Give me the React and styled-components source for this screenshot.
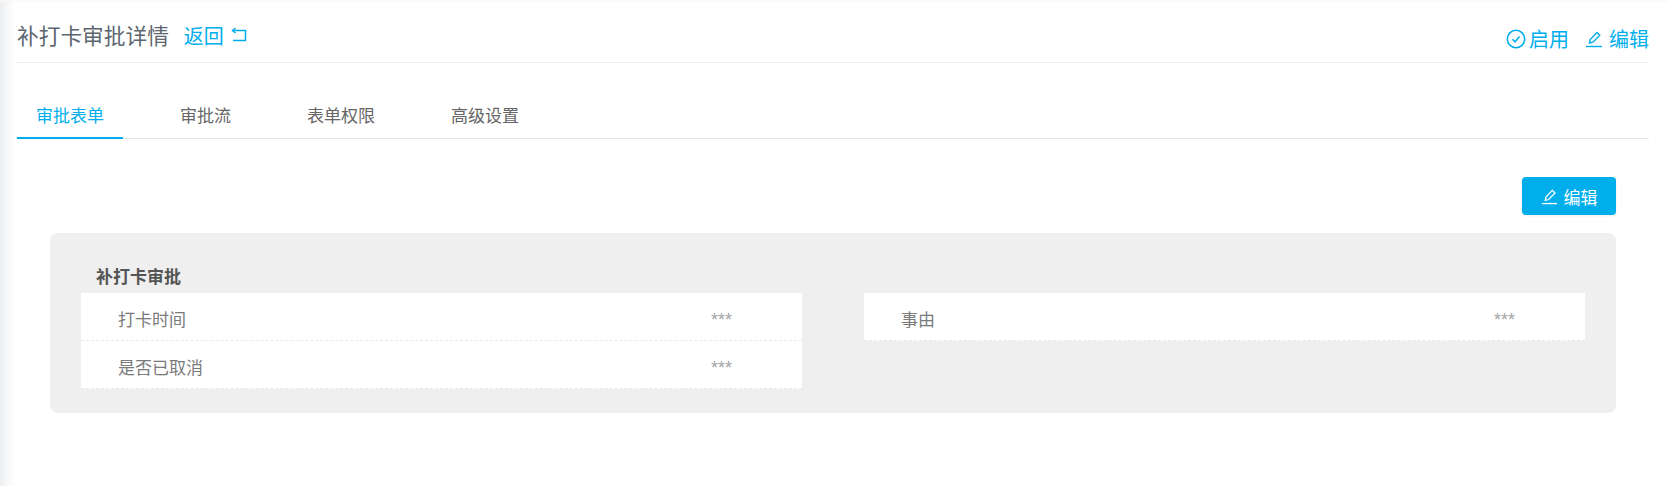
import React from 'react'
import styled, { createGlobalStyle } from 'styled-components'

const GlobalStyle = createGlobalStyle`
  html, body {
    margin: 0;
    padding: 0;
    background: #fff;
  }
  * {
    box-sizing: border-box;
  }
`;

const Page = styled.div`
  width: 1669px;
  height: 486px;
  overflow: hidden;
  padding: 0 20px 0 17px;
  background:
    linear-gradient(to bottom, #f8f8f8 0, rgba(255, 255, 255, 0) 3px),
    linear-gradient(to right, #eceef0 0, #f5f6f7 6px, #fff 15px);
  font-family: "Noto Sans CJK SC", "Liberation Sans", sans-serif;
  color: #666;
`;

const Header = styled.div`
  height: 63px;
  display: flex;
  justify-content: space-between;
  border-bottom: 1px solid #ebebeb;
`;

const HeaderLeft = styled.div`
  display: flex;
  align-items: center;
  height: 36px;
  margin-top: 18px;
`;

const Title = styled.span`
  font-size: 21.7px;
  line-height: 32px;
  padding-bottom: 3px;
  color: #5c6670;
`;

const Link = styled.a`
  display: inline-flex;
  align-items: center;
  color: #00aeeb;
  font-size: 20px;
  line-height: 36px;
  margin-left: ${props => props.$gap || 0}px;
`;

const HeaderRight = styled.div`
  display: flex;
  align-items: center;
  height: 36px;
  margin-top: 21px;
`;

const Tabs = styled.div`
  display: flex;
  gap: 38px;
  height: 76px;
  padding-top: 30px;
  border-bottom: 1px solid #e6e6e6;
`;

const Tab = styled.div`
  height: 46px;
  padding: 0 19px;
  font-size: 17px;
  line-height: 44px;
  color: ${props => (props.$active ? '#00aeeb' : '#666')};
  border-bottom: 2px solid ${props => (props.$active ? '#00aeeb' : 'transparent')};
`;

const Toolbar = styled.div`
  display: flex;
  justify-content: flex-end;
  padding: 38px 33px 0 0;
`;

const Button = styled.button`
  width: 94px;
  height: 38px;
  display: flex;
  align-items: center;
  justify-content: center;
  gap: 6px;
  border: 0;
  border-radius: 4px;
  padding: 0;
  background: #00aeeb;
  color: #fff;
  font-family: inherit;
  font-size: 17px;
  box-shadow: 0 1px 3px rgba(0, 0, 0, 0.08);
`;

const Panel = styled.div`
  margin: 18px 33px 0;
  height: 180px;
  padding: 30px 31px 0;
  background: #efefef;
  border-radius: 8px;
`;

const SectionTitle = styled.div`
  height: 30px;
  padding-left: 15px;
  font-size: 17px;
  font-weight: 700;
  line-height: 26px;
  color: #555;
`;

const Columns = styled.div`
  display: grid;
  grid-template-columns: 721px 721px;
  column-gap: 62px;
  align-items: start;
`;

const Rows = styled.div`
  background: #fff;
`;

const Row = styled.div`
  display: flex;
  height: 48px;
  padding-left: 37px;
  border-bottom: 1px dashed #eaeaea;
`;

const Label = styled.div`
  width: 593px;
  font-size: 17px;
  line-height: 51px;
  color: #7a7a7a;
`;

const Value = styled.div`
  font-family: "Liberation Sans", sans-serif;
  font-size: 18px;
  line-height: 54px;
  color: #a5a5a5;
`;

const IconSvg = styled.svg`
  display: block;
  flex: none;
  margin: ${props => props.$margin || '0'};
`;

const ReturnIcon = () => (
  <IconSvg $margin="0 0 0 6px" width="18" height="18" viewBox="0 0 18 18" fill="none" stroke="currentColor" strokeWidth="1.5">
    <path d="M2.5 3.5H15.5V13.5H3" />
    <path d="M5.5 1L2.5 3.5L5.5 6" />
  </IconSvg>
);

const CheckIcon = () => (
  <IconSvg $margin="0 3px 0 0" width="20" height="20" viewBox="0 0 20 20" fill="none" stroke="currentColor" strokeWidth="1.5">
    <circle cx="10" cy="10" r="8.7" />
    <path d="M6.5 10.2L9 12.8L13.6 7.4" />
  </IconSvg>
);

const EditIcon = ({ size = 18, margin }) => (
  <IconSvg $margin={margin} width={size} height={size} viewBox="0 0 18 18" fill="none" stroke="currentColor" strokeWidth="1.4">
    <path d="M4.5 13L5.2 9.6L12 2.5L14.8 5.2L8 12.2Z" />
    <path d="M1 16.5H17" />
  </IconSvg>
);

const Field = ({ label }) => (
  <Row>
    <Label>{label}</Label>
    <Value>***</Value>
  </Row>
);

const App = () => {
  return (
    <Page>
      <GlobalStyle />
      <Header>
        <HeaderLeft>
          <Title>补打卡审批详情</Title>
          <Link $gap={15}>返回<ReturnIcon /></Link>
        </HeaderLeft>
        <HeaderRight>
          <Link><CheckIcon />启用</Link>
          <Link $gap={16}><EditIcon size={18} margin="0 6px 0 0" />编辑</Link>
        </HeaderRight>
      </Header>
      <Tabs>
        <Tab $active>审批表单</Tab>
        <Tab>审批流</Tab>
        <Tab>表单权限</Tab>
        <Tab>高级设置</Tab>
      </Tabs>
      <Toolbar>
        <Button><EditIcon size={17} />编辑</Button>
      </Toolbar>
      <Panel>
        <SectionTitle>补打卡审批</SectionTitle>
        <Columns>
          <Rows>
            <Field label="打卡时间" />
            <Field label="是否已取消" />
          </Rows>
          <Rows>
            <Field label="事由" />
          </Rows>
        </Columns>
      </Panel>
    </Page>
  )
}

export default App
